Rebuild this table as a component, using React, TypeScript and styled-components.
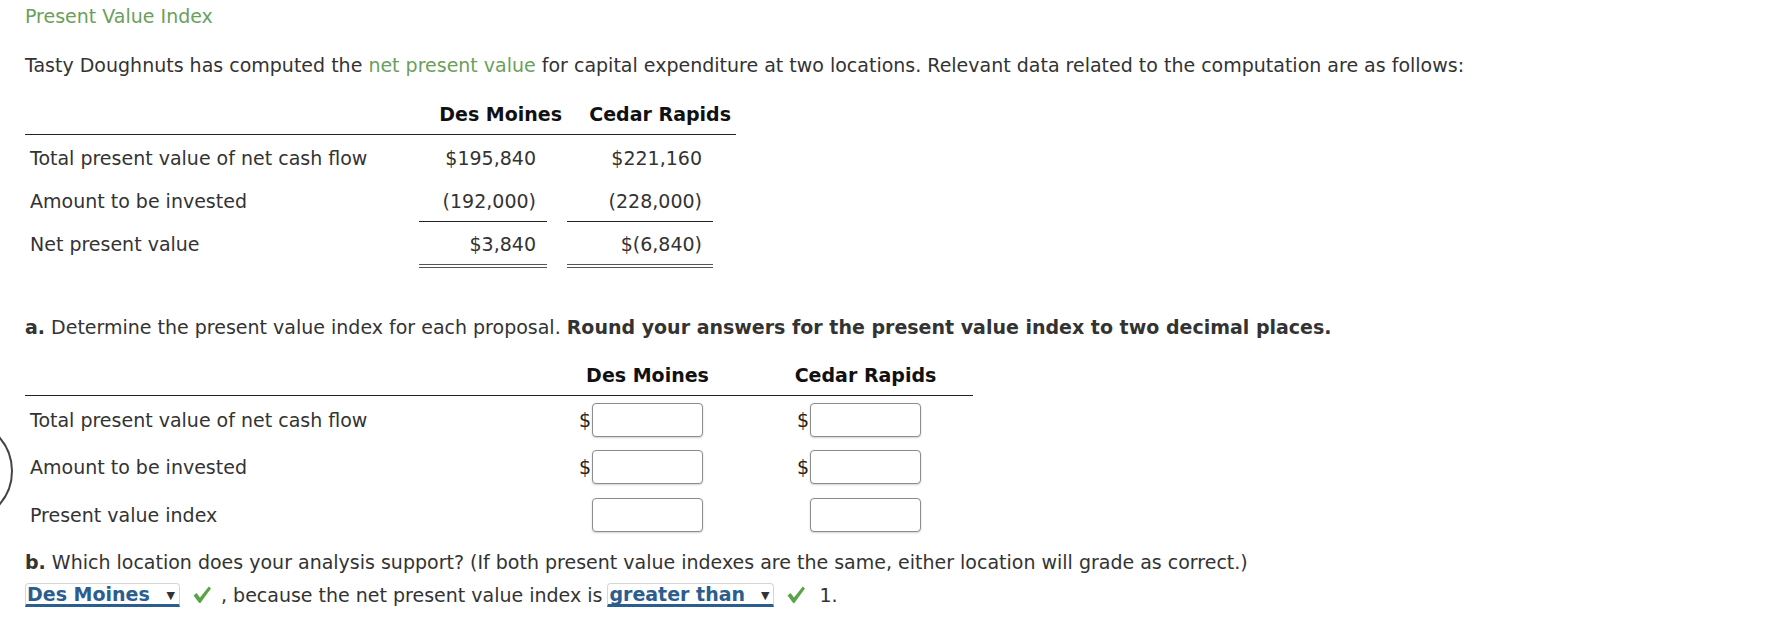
import React from "react"
import styled, { createGlobalStyle } from "styled-components"

const GlobalStyle = createGlobalStyle`
  html, body {
    margin: 0;
    padding: 0;
    background: #fff;
  }
  body {
    font-family: "DejaVu Sans", Verdana, sans-serif;
    font-size: 19px;
    color: #333;
    overflow: hidden;
  }
`

type Underline = "none" | "single" | "double"

const sourceRows: { label: string; values: [string, string]; underline: Underline }[] = [
  { label: "Total present value of net cash flow", values: ["$195,840", "$221,160"], underline: "none" },
  { label: "Amount to be invested", values: ["(192,000)", "(228,000)"], underline: "single" },
  { label: "Net present value", values: ["$3,840", "$(6,840)"], underline: "double" },
]

const answerRows: { label: string; dollar: boolean }[] = [
  { label: "Total present value of net cash flow", dollar: true },
  { label: "Amount to be invested", dollar: true },
  { label: "Present value index", dollar: false },
]

// inner margins of the value blocks, per column [left, right]
const colMargins: [number, number][] = [
  [4, 18],
  [2, 23],
]

const CheckMark = ({ after = 9 }: { after?: number }) => (
  <S.Check viewBox="0 0 20 20" $after={after} aria-hidden>
    <path d="M1.5 10.5 L4.5 8 L8 12.6 L16.8 1.5 L19 3.4 L8.4 18 L7.2 18 Z" fill="#5aa447" />
  </S.Check>
)

const App: React.FC = () => {
  return (
    <S.Page>
      <GlobalStyle />
      <S.SideRing />
      <S.Title>Present Value Index</S.Title>
      <S.Intro>
        Tasty Doughnuts has computed the <S.Term>net present value</S.Term> for capital
        expenditure at two locations. Relevant data related to the computation are as
        follows:
      </S.Intro>

      <S.DataTable>
        <S.HeadLabel />
        <S.HeadCell $padRight={3}>Des Moines</S.HeadCell>
        <S.HeadCell $padRight={5}>Cedar Rapids</S.HeadCell>
        {sourceRows.map((row) => (
          <React.Fragment key={row.label}>
            <S.RowLabel>{row.label}</S.RowLabel>
            {row.values.map((v, i) => (
              <S.ValueCell key={i}>
                <S.ValueBlock
                  $underline={row.underline}
                  $ml={colMargins[i][0]}
                  $mr={colMargins[i][1]}
                >
                  {v}
                </S.ValueBlock>
              </S.ValueCell>
            ))}
          </React.Fragment>
        ))}
      </S.DataTable>

      <S.Question>
        <b>a.</b> Determine the present value index for each proposal.{" "}
        <S.Strong>Round your answers for the present value index to two decimal places.</S.Strong>
      </S.Question>

      <S.AnswerTable>
        <S.AnswerHeadLabel />
        <S.AnswerHead>
          <S.HeadText>Des Moines</S.HeadText>
        </S.AnswerHead>
        <S.AnswerHead>
          <S.HeadText>Cedar Rapids</S.HeadText>
        </S.AnswerHead>
        {answerRows.map((row) => (
          <React.Fragment key={row.label}>
            <S.AnswerLabel>{row.label}</S.AnswerLabel>
            {[0, 1].map((c) => (
              <S.AnswerCell key={c}>
                <S.Dollar>{row.dollar ? "$" : ""}</S.Dollar>
                <S.Field type="text" />
              </S.AnswerCell>
            ))}
          </React.Fragment>
        ))}
      </S.AnswerTable>

      <S.QuestionB>
        <b>b.</b> Which location does your analysis support? (If both present value indexes are
        the same, either location will grade as correct.)
      </S.QuestionB>

      <S.AnswerLine>
        <S.Select $width={155}>
          Des Moines
          <S.Caret>▼</S.Caret>
        </S.Select>
        <CheckMark />
        <S.Plain>, because the net present value index is</S.Plain>
        <S.Select $width={167}>
          greater than
          <S.Caret>▼</S.Caret>
        </S.Select>
        <CheckMark after={13} />
        <S.Plain>1.</S.Plain>
      </S.AnswerLine>
    </S.Page>
  )
}

const S = {
  Page: styled.div`
    position: relative;
    width: 1786px;
    height: 628px;
    box-sizing: border-box;
    padding: 6px 0 0 25px;
  `,
  SideRing: styled.div`
    position: absolute;
    left: -91px;
    top: 419px;
    width: 100px;
    height: 100px;
    border: 2px solid #444;
    border-radius: 50%;
  `,
  Title: styled.div`
    color: #6a9f5c;
    line-height: 20px;
  `,
  Intro: styled.p`
    margin: 29px 0 0;
    line-height: 20px;
  `,
  Term: styled.span`
    color: #6a9f5c;
  `,
  DataTable: styled.div`
    display: grid;
    grid-template-columns: 390px 150px 171px;
    grid-auto-rows: 43px;
    margin-top: 19px;
    width: 711px;
  `,
  HeadLabel: styled.div`
    height: 40px;
    border-bottom: 1px solid #222;
  `,
  HeadCell: styled.div<{ $padRight: number }>`
    height: 40px;
    line-height: 40px;
    border-bottom: 1px solid #222;
    text-align: right;
    padding-right: ${({ $padRight }) => $padRight}px;
    font-weight: bold;
    color: #111;
    white-space: nowrap;
  `,
  RowLabel: styled.div`
    padding-left: 5px;
    line-height: 43px;
    white-space: nowrap;
  `,
  ValueCell: styled.div`
    display: flex;
  `,
  ValueBlock: styled.div<{ $underline: Underline; $ml: number; $mr: number }>`
    flex: 1;
    height: 41px;
    line-height: 43px;
    margin: 0 ${({ $mr }) => $mr}px 0 ${({ $ml }) => $ml}px;
    padding-right: 11px;
    text-align: right;
    white-space: nowrap;
    border-bottom: ${({ $underline }) =>
      $underline === "single"
        ? "1px solid #222"
        : $underline === "double"
        ? "4px double #555"
        : "none"};
  `,
  Question: styled.p`
    margin: 51px 0 0;
    line-height: 20px;
    white-space: nowrap;
  `,
  Strong: styled.b`
    font-weight: bold;
  `,
  AnswerTable: styled.div`
    display: grid;
    grid-template-columns: 554px 218px 176px;
    grid-template-rows: 41px repeat(3, 47.5px);
    margin-top: 18px;
    width: 948px;
  `,
  AnswerHeadLabel: styled.div`
    height: 40px;
    border-bottom: 1px solid #222;
  `,
  AnswerHead: styled.div`
    height: 40px;
    line-height: 40px;
    border-bottom: 1px solid #222;
    padding-left: 13px;
    font-weight: bold;
    color: #111;
  `,
  HeadText: styled.div`
    width: 111px;
    display: flex;
    justify-content: center;
    white-space: nowrap;
  `,
  AnswerLabel: styled.div`
    padding-left: 5px;
    display: flex;
    align-items: center;
    white-space: nowrap;
  `,
  AnswerCell: styled.div`
    display: flex;
    align-items: center;
  `,
  Dollar: styled.span`
    width: 13px;
    color: #222;
  `,
  Field: styled.input`
    box-sizing: border-box;
    width: 111px;
    height: 34px;
    margin: 0;
    border: 1px solid #8c8c8c;
    border-radius: 4px;
    box-shadow: 0 1px 2px rgba(0, 0, 0, 0.18);
    background: #fff;
  `,
  QuestionB: styled.p`
    margin: 13px 0 0;
    line-height: 20px;
    white-space: nowrap;
  `,
  AnswerLine: styled.div`
    display: flex;
    align-items: center;
    margin-top: 11px;
    height: 24px;
  `,
  Select: styled.div<{ $width: number }>`
    position: relative;
    box-sizing: border-box;
    width: ${({ $width }) => $width}px;
    height: 24px;
    line-height: 21px;
    padding-left: 1px;
    border: 1px solid #d6d6d6;
    border-bottom: 3px solid #2b5d8e;
    border-radius: 4px 4px 0 0;
    color: #2b5d8e;
    font-weight: bold;
    white-space: nowrap;
  `,
  Caret: styled.span`
    position: absolute;
    right: 4px;
    top: 1px;
    font-size: 11px;
    color: #333;
  `,
  Check: styled.svg<{ $after: number }>`
    width: 20px;
    height: 20px;
    margin: 0 ${({ $after }) => $after}px 0 12px;
  `,
  Plain: styled.span`
    line-height: 20px;
    margin-right: 5px;
  `,
}

export default App
